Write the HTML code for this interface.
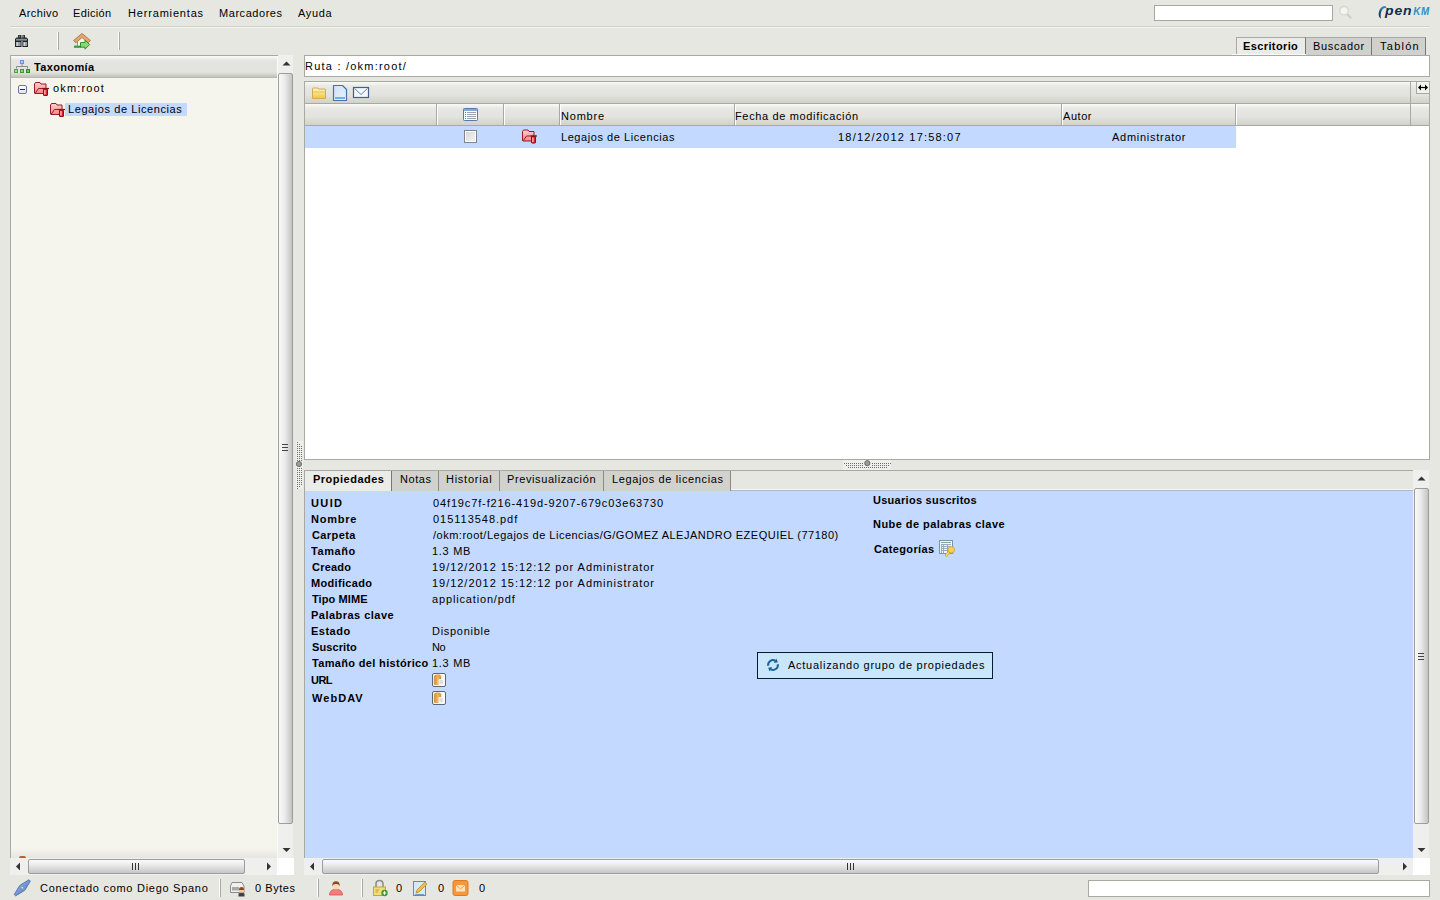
<!DOCTYPE html>
<html><head><meta charset="utf-8">
<style>
*{box-sizing:border-box;margin:0;padding:0}
html,body{width:1440px;height:900px;overflow:hidden}
body{background:#e7e7e2;font-family:"Liberation Sans",sans-serif;font-size:10.5px;letter-spacing:0.8px;color:#000;position:relative}
.a{position:absolute}
.t{position:absolute;white-space:nowrap;line-height:12px}
.b{font-weight:bold;letter-spacing:0.55px;color:#000}
.grad{background:linear-gradient(#fbfbf6 0px,#f2f2ed 2px,#e9e9e8 4px,#e5e5e1 7px,#e2e2de 13px,#dadad4 17px,#d2d2cb 21px)}
.trk{background:#efefee}
.thv{background:linear-gradient(90deg,#f9f9f9 0%,#ededed 40%,#cfcfcf 85%,#c4c4c4 100%);border:1px solid #9d9d9d;border-radius:2px}
.thh{background:linear-gradient(#fafafa 0%,#efefef 30%,#d2d2d2 80%,#c6c6c6 100%);border:1px solid #9d9d9d;border-radius:2px}
svg{position:absolute;overflow:visible}
.sep{position:absolute;width:2px;border-left:1px solid #a9a9a3;border-right:1px solid #fff}
.sepw{position:absolute;width:2px;border-left:1px solid #fff;border-right:1px solid #a9a9a3}
</style></head><body>

<!-- ============ MENU ============ -->
<div class="a" style="left:10px;top:26px;width:1420px;height:1px;background:#d2d2cd"></div>
<div class="a" style="left:10px;top:27px;width:1420px;height:1px;background:#f4f4f1"></div>

<!-- search -->
<div class="a" style="left:1154px;top:5px;width:179px;height:16px;background:#fff;border:1px solid #a7a7a2"></div>
<svg style="left:1338px;top:5px" width="16" height="16" viewBox="0 0 16 16">
 <circle cx="6" cy="5.7" r="4.2" fill="#f4f4f2" stroke="#d6d6d2" stroke-width="1.3"/>
 <line x1="9" y1="9" x2="13.3" y2="13.3" stroke="#cfcfca" stroke-width="2"/>
</svg>
<!-- logo -->
<svg style="left:1377px;top:4px" width="56" height="16" viewBox="0 0 56 16">
 <defs><linearGradient id="lg" x1="0" y1="0" x2="0" y2="1"><stop offset="0" stop-color="#3c93c8"/><stop offset="0.5" stop-color="#1b4f7a"/><stop offset="1" stop-color="#0c2238"/></linearGradient></defs>
 <path d="M7.6,2.1 C4,2.3 1.6,6.5 1.7,10.6 C1.8,12.8 2.7,14.1 3.8,14.4 C3.3,11.6 3.7,7.6 5.6,5.3 C6.6,4.2 8,3.9 9.6,4.2 C9.2,2.9 8.6,2.1 7.6,2.1Z" fill="url(#lg)"/>
 <text x="8" y="10.9" font-family="Liberation Sans" font-weight="bold" font-style="italic" font-size="12.5" fill="#112d4a" textLength="27.5" lengthAdjust="spacingAndGlyphs">pen</text>
 <text x="36.2" y="10.9" font-family="Liberation Sans" font-weight="bold" font-style="italic" font-size="10.5" fill="#2f8fc6" textLength="16.8" lengthAdjust="spacingAndGlyphs">KM</text>
</svg>

<!-- ============ TOOLBAR ============ -->
<svg style="left:14px;top:34px" width="16" height="14" viewBox="0 0 16 14">
 <rect x="4" y="1" width="3.4" height="3.5" fill="#2a2f34"/><rect x="8.4" y="1" width="2.6" height="3.5" fill="#2a2f34"/>
 <rect x="4.8" y="1.5" width="1" height="2.5" fill="#7d858c"/><rect x="9" y="1.5" width="1" height="2.5" fill="#7d858c"/>
 <path d="M1,13 V5 L2.5,3.5 H7.5 V13Z" fill="#1f2327"/>
 <path d="M8.4,13 V3.5 H12.5 L14,5 V13Z" fill="#1f2327"/>
 <rect x="7" y="4.5" width="2" height="2.5" fill="#1f2327"/>
 <rect x="2" y="4.8" width="11" height="1.8" fill="#8a9298"/>
 <rect x="2" y="8" width="4.6" height="4" fill="#9aa1a7"/><rect x="9.2" y="8" width="3.9" height="4" fill="#9aa1a7"/>
 <rect x="2.6" y="8" width="1.2" height="4" fill="#d3d7da"/><rect x="9.8" y="8" width="1.2" height="4" fill="#d3d7da"/>
</svg>
<div class="sepw" style="left:57px;top:32px;height:18px"></div>
<svg style="left:72px;top:31px" width="20" height="20" viewBox="0 0 20 20">
 <path d="M5,10.5 L10,6 L15,10.5 V16 H5Z" fill="#f8f6ef"/>
 <path d="M1.6,9.4 L10,2.4 L18.4,9.4 L16.2,11.8 L10,6.6 L3.8,11.8Z" fill="#e2a667" stroke="#a06c36" stroke-width="0.8" stroke-linejoin="round"/>
 <path d="M5.5,11 V15" stroke="#8e9a8c" stroke-width="1"/>
 <rect x="2" y="14.6" width="7" height="2.2" fill="#3f9a35"/>
 <path d="M8.5,11.5 H13 V9 L17.6,13.6 L13,18.2 V16.2 H8.5Z" fill="#8ed479" stroke="#3b8d32" stroke-width="1"/>
</svg>
<div class="sepw" style="left:118px;top:32px;height:18px"></div>

<!-- top right tabs -->
<div class="a" style="left:1236px;top:37px;width:70px;height:18px;background:#ebebe7;border:1px solid #a9a9a3;border-right-color:#767672;border-bottom:none"></div>
<div class="a" style="left:1232px;top:54px;width:74px;height:1px;background:#fbfbf9"></div>
<div class="a" style="left:1306px;top:37px;width:66px;height:18px;background:#d0d0cc;border:1px solid #a9a9a3;border-right-color:#767672;border-left:none;border-bottom:none"></div>
<div class="a" style="left:1372px;top:37px;width:54px;height:18px;background:#d0d0cc;border:1px solid #a9a9a3;border-right-color:#767672;border-left:none;border-bottom:none"></div>

<!-- ============ TREE ============ -->
<div class="a" style="left:10px;top:55px;width:268px;height:803px;background:#f5f5ee;border-left:1px solid #a9a9a3;border-top:1px solid #a9a9a3"></div>
<div class="a" style="left:11px;top:848px;width:266px;height:10px;background:linear-gradient(rgba(245,244,238,0),#e6e6e2)"></div>
<div class="a" style="left:11px;top:56px;width:266px;height:22px;background:linear-gradient(#fbfbf9 0px,#f0f0ec 2px,#e6e6e6 4px,#e3e3df 6px,#e3e3df 16px,#d8d8d2 18px,#c9c9c2 20px,#b6b6af 22px)"></div>
<div class="a" style="left:277px;top:56px;width:1px;height:802px;background:#fbfbf8"></div>
<svg style="left:13px;top:59px" width="18" height="15" viewBox="0 0 18 15">
 <rect x="7.5" y="1.5" width="3" height="3" fill="#a9cdf5" stroke="#5d95d8" stroke-width="1"/>
 <path d="M9,4.5 V7.5 M3.5,9.5 V7.5 H14.5 V9.5" fill="none" stroke="#8a8a8a" stroke-width="1"/>
 <rect x="1.5" y="10.5" width="3" height="3" fill="#9fe08f" stroke="#4aa63c" stroke-width="1"/>
 <rect x="7.5" y="10.5" width="3" height="3" fill="#8bd57b" stroke="#3d9a32" stroke-width="1"/>
 <rect x="13.5" y="10.5" width="3" height="3" fill="#6fc25e" stroke="#2f8a28" stroke-width="1"/>
</svg>
<!-- collapse box -->
<div class="a" style="left:18px;top:85px;width:9px;height:9px;border:1px solid #6f77a0;border-radius:2px;background:linear-gradient(#fff,#dfe3f0)"></div>
<div class="a" style="left:20px;top:89px;width:5px;height:1px;background:#1b2a7a"></div>
<!-- folder icon template (okm:root) -->
<svg style="left:33px;top:81px" width="17" height="15" viewBox="0 0 17 15">
 <defs><linearGradient id="fg" x1="0" y1="0" x2="0" y2="1"><stop offset="0" stop-color="#ffd0d0"/><stop offset="1" stop-color="#ff8080"/></linearGradient></defs>
 <path d="M1.5,3 L2.5,1.5 H7 L8,3 H13 V12.5 H2 L1.5,12Z" fill="url(#fg)" stroke="#8e1f24" stroke-width="1"/>
 <path d="M2,12.5 L5.5,7.5 H15" fill="none" stroke="#8e1f24" stroke-width="1"/>
 <rect x="10.5" y="8" width="4" height="6.5" fill="#d9262c" stroke="#8a1116" stroke-width="1" rx="0.5"/>
 <rect x="11.3" y="9" width="1.2" height="4.5" fill="#ffd6d6"/>
 <path d="M9.5,7.5 H16" stroke="#8a1116" stroke-width="1.2"/>
</svg>
<div class="a" style="left:65px;top:103px;width:122px;height:13px;background:#c3d9ff"></div>
<svg style="left:49px;top:102px" width="17" height="15" viewBox="0 0 17 15">
 <path d="M1.5,3 L2.5,1.5 H7 L8,3 H13 V12.5 H2 L1.5,12Z" fill="url(#fg)" stroke="#8e1f24" stroke-width="1"/>
 <path d="M2,12.5 L5.5,7.5 H15" fill="none" stroke="#8e1f24" stroke-width="1"/>
 <rect x="10.5" y="8" width="4" height="6.5" fill="#d9262c" stroke="#8a1116" stroke-width="1" rx="0.5"/>
 <rect x="11.3" y="9" width="1.2" height="4.5" fill="#ffd6d6"/>
 <path d="M9.5,7.5 H16" stroke="#8a1116" stroke-width="1.2"/>
</svg>
<!-- small orange bit at bottom of tree -->
<div class="a" style="left:19px;top:856px;width:7px;height:2px;background:#b4652a;border-radius:3px 3px 0 0"></div>

<!-- tree vertical scrollbar -->
<div class="a trk" style="left:278px;top:55px;width:15px;height:803px"></div>
<svg style="left:278px;top:55px" width="15" height="15" viewBox="0 0 15 15"><path d="M4.5,10.5 L8.5,6.5 L12.5,10.5Z" fill="#333"/></svg>
<div class="a thv" style="left:278px;top:73px;width:15px;height:751px"></div>
<div class="a" style="left:282px;top:444px;width:6px;height:1px;background:#444"></div>
<div class="a" style="left:282px;top:447px;width:6px;height:1px;background:#444"></div>
<div class="a" style="left:282px;top:450px;width:6px;height:1px;background:#444"></div>
<svg style="left:278px;top:843px" width="15" height="17" viewBox="0 0 15 17"><path d="M4.5,5 L8.5,9 L12.5,5Z" fill="#333"/></svg>
<!-- tree horizontal scrollbar -->
<div class="a trk" style="left:10px;top:858px;width:267px;height:17px"></div>
<svg style="left:10px;top:858px" width="18" height="17" viewBox="0 0 18 17"><path d="M10,4.5 L6,8.5 L10,12.5Z" fill="#333"/></svg>
<div class="a thh" style="left:28px;top:859px;width:217px;height:15px"></div>
<div class="a" style="left:132px;top:863px;width:1px;height:7px;background:#333"></div>
<div class="a" style="left:135px;top:863px;width:1px;height:7px;background:#333"></div>
<div class="a" style="left:138px;top:863px;width:1px;height:7px;background:#333"></div>
<svg style="left:258px;top:858px" width="18" height="17" viewBox="0 0 18 17"><path d="M9,4.5 L13,8.5 L9,12.5Z" fill="#333"/></svg>
<div class="a" style="left:277px;top:858px;width:17px;height:17px;background:#fff"></div>

<!-- vertical splitter grip -->
<div class="a" style="left:296px;top:441px;width:7px;height:48px;background:#eeeeeb"></div>
<svg style="left:294px;top:440px" width="10" height="50" viewBox="0 0 10 50"><g fill="#6e6e6e"><rect x="3" y="2" width="1" height="1"/><rect x="3" y="4" width="1" height="1"/><rect x="3" y="6" width="1" height="1"/><rect x="3" y="8" width="1" height="1"/><rect x="3" y="10" width="1" height="1"/><rect x="3" y="12" width="1" height="1"/><rect x="3" y="14" width="1" height="1"/><rect x="3" y="16" width="1" height="1"/><rect x="3" y="18" width="1" height="1"/><rect x="3" y="20" width="1" height="1"/><rect x="3" y="28" width="1" height="1"/><rect x="3" y="30" width="1" height="1"/><rect x="3" y="32" width="1" height="1"/><rect x="3" y="34" width="1" height="1"/><rect x="3" y="36" width="1" height="1"/><rect x="3" y="38" width="1" height="1"/><rect x="3" y="40" width="1" height="1"/><rect x="3" y="42" width="1" height="1"/><rect x="3" y="44" width="1" height="1"/><rect x="3" y="46" width="1" height="1"/><rect x="3" y="48" width="1" height="1"/><rect x="5" y="4" width="1" height="1"/><rect x="5" y="6" width="1" height="1"/><rect x="5" y="8" width="1" height="1"/><rect x="5" y="10" width="1" height="1"/><rect x="5" y="12" width="1" height="1"/><rect x="5" y="14" width="1" height="1"/><rect x="5" y="16" width="1" height="1"/><rect x="5" y="18" width="1" height="1"/><rect x="5" y="20" width="1" height="1"/><rect x="5" y="28" width="1" height="1"/><rect x="5" y="30" width="1" height="1"/><rect x="5" y="32" width="1" height="1"/><rect x="5" y="34" width="1" height="1"/><rect x="5" y="36" width="1" height="1"/><rect x="5" y="38" width="1" height="1"/><rect x="5" y="40" width="1" height="1"/><rect x="5" y="42" width="1" height="1"/><rect x="5" y="44" width="1" height="1"/><rect x="5" y="46" width="1" height="1"/><rect x="7" y="6" width="1" height="1"/><rect x="7" y="8" width="1" height="1"/><rect x="7" y="10" width="1" height="1"/><rect x="7" y="12" width="1" height="1"/><rect x="7" y="14" width="1" height="1"/><rect x="7" y="16" width="1" height="1"/><rect x="7" y="18" width="1" height="1"/><rect x="7" y="20" width="1" height="1"/><rect x="7" y="28" width="1" height="1"/><rect x="7" y="30" width="1" height="1"/><rect x="7" y="32" width="1" height="1"/><rect x="7" y="34" width="1" height="1"/><rect x="7" y="36" width="1" height="1"/><rect x="7" y="38" width="1" height="1"/><rect x="7" y="40" width="1" height="1"/><rect x="7" y="42" width="1" height="1"/><rect x="7" y="44" width="1" height="1"/></g><circle cx="5" cy="24" r="2.6" fill="#9a9a9a" stroke="#666" stroke-width="0.9"/></svg>

<!-- ============ RUTA ============ -->
<div class="a" style="left:304px;top:55px;width:1126px;height:22px;background:#fff;border:1px solid #a9a9a3"></div>

<!-- ============ FILE LIST ============ -->
<div class="a" style="left:304px;top:81px;width:1126px;height:379px;background:#fff;border:1px solid #a9a9a3"></div>
<div class="a grad" style="left:305px;top:82px;width:1124px;height:22px;border-bottom:1px solid #a9a9a3"></div>
<!-- folder yellow -->
<svg style="left:311px;top:87px" width="16" height="13" viewBox="0 0 16 13">
 <defs><linearGradient id="yg" x1="0" y1="0" x2="0" y2="1"><stop offset="0" stop-color="#fff6c4"/><stop offset="1" stop-color="#f1c63a"/></linearGradient></defs>
 <path d="M1.5,2 L2,1 H7 L7.5,2 H14.5 V11.5 H1.5Z" fill="url(#yg)" stroke="#d8a854" stroke-width="1"/>
 <path d="M2,5 H14" stroke="#e5c36a" stroke-width="1"/>
</svg>
<svg style="left:332px;top:84px" width="16" height="18" viewBox="0 0 16 18">
 <defs><linearGradient id="bg2" x1="0" y1="0" x2="1" y2="1"><stop offset="0" stop-color="#cfe1f7"/><stop offset="1" stop-color="#e8f1fb"/></linearGradient></defs>
 <path d="M1.5,1.5 H10.5 L14.5,5.5 V16.5 H1.5Z" fill="url(#bg2)" stroke="#4b72a8" stroke-width="1.2" stroke-linejoin="round"/>
 <rect x="3" y="13" width="10" height="2" fill="#6db3ea"/>
</svg>
<svg style="left:352px;top:86px" width="18" height="13" viewBox="0 0 18 13">
 <rect x="1.5" y="1.5" width="15" height="10" fill="#f3f7fd" stroke="#435f8c" stroke-width="1.2"/>
 <path d="M2.5,2.5 L9,8.5 L15.5,2.5" fill="none" stroke="#6a86b8" stroke-width="1"/>
</svg>
<!-- expand button -->
<div class="a" style="left:1410px;top:82px;width:1px;height:44px;background:#a9a9a3"></div>
<div class="a" style="left:1416px;top:82px;width:13px;height:12px;background:#f2f2ee;border-left:1px solid #a9a9a3;border-bottom:1px solid #a9a9a3"></div>
<svg style="left:1417px;top:82px" width="12" height="11" viewBox="0 0 12 11"><path d="M3,5.5 H9" stroke="#000" stroke-width="1.2"/><path d="M1,5.5 L4,2.5 V8.5Z M11,5.5 L8,2.5 V8.5Z" fill="#000"/></svg>

<!-- header row -->
<div class="a grad" style="left:305px;top:104px;width:1124px;height:22px;border-bottom:1px solid #a9a9a3"></div>
<div class="sep" style="left:436px;top:104px;height:21px"></div>
<div class="sep" style="left:503px;top:104px;height:21px"></div>
<div class="sep" style="left:559px;top:104px;height:21px"></div>
<div class="sep" style="left:734px;top:104px;height:21px"></div>
<div class="sep" style="left:1061px;top:104px;height:21px"></div>
<div class="sep" style="left:1235px;top:104px;height:21px"></div>
<div class="a" style="left:1410px;top:104px;width:1px;height:21px;background:#a9a9a3"></div>
<svg style="left:462px;top:107px" width="17" height="15" viewBox="0 0 17 15">
 <rect x="1.5" y="1.5" width="14" height="12" fill="#fbfcfe" stroke="#5b78a6" stroke-width="1" rx="0.8"/>
 <rect x="2" y="2" width="13" height="2" fill="#86a8d8"/>
 <g fill="#5f7fb0"><rect x="3" y="5" width="1" height="1"/><rect x="3" y="7" width="1" height="1"/><rect x="3" y="9" width="1" height="1"/><rect x="3" y="11" width="1" height="1"/></g>
 <g fill="#9aa3ad"><rect x="5" y="5" width="9" height="1"/><rect x="5" y="7" width="9" height="1"/><rect x="5" y="9" width="9" height="1"/><rect x="5" y="11" width="9" height="1"/></g>
</svg>

<!-- data row -->
<div class="a" style="left:305px;top:126px;width:931px;height:22px;background:#c3d9ff"></div>
<div class="a" style="left:464px;top:130px;width:13px;height:13px;border:1px solid #7d8390;background:linear-gradient(135deg,#d6d6d8,#f6f6f6);box-shadow:inset 0 0 0 1px #fff"></div>
<svg style="left:521px;top:128px" width="17" height="16" viewBox="0 0 17 15">
 <path d="M1.5,3 L2.5,1.5 H7 L8,3 H13 V12.5 H2 L1.5,12Z" fill="url(#fg)" stroke="#8e1f24" stroke-width="1"/>
 <path d="M2,12.5 L5.5,7.5 H15" fill="none" stroke="#8e1f24" stroke-width="1"/>
 <rect x="10.5" y="8" width="4" height="6.5" fill="#d9262c" stroke="#8a1116" stroke-width="1" rx="0.5"/>
 <rect x="11.3" y="9" width="1.2" height="4.5" fill="#ffd6d6"/>
 <path d="M9.5,7.5 H16" stroke="#8a1116" stroke-width="1.2"/>
</svg>

<!-- horizontal splitter grip -->
<div class="a" style="left:843px;top:460px;width:48px;height:10px;background:#eeeeeb"></div>
<svg style="left:842px;top:459px" width="52" height="11" viewBox="0 0 52 11"><g fill="#6e6e6e"><rect x="2" y="4" width="1" height="1"/><rect x="4" y="4" width="1" height="1"/><rect x="6" y="4" width="1" height="1"/><rect x="8" y="4" width="1" height="1"/><rect x="10" y="4" width="1" height="1"/><rect x="12" y="4" width="1" height="1"/><rect x="14" y="4" width="1" height="1"/><rect x="16" y="4" width="1" height="1"/><rect x="18" y="4" width="1" height="1"/><rect x="20" y="4" width="1" height="1"/><rect x="30" y="4" width="1" height="1"/><rect x="32" y="4" width="1" height="1"/><rect x="34" y="4" width="1" height="1"/><rect x="36" y="4" width="1" height="1"/><rect x="38" y="4" width="1" height="1"/><rect x="40" y="4" width="1" height="1"/><rect x="42" y="4" width="1" height="1"/><rect x="44" y="4" width="1" height="1"/><rect x="46" y="4" width="1" height="1"/><rect x="48" y="4" width="1" height="1"/><rect x="4" y="6" width="1" height="1"/><rect x="6" y="6" width="1" height="1"/><rect x="8" y="6" width="1" height="1"/><rect x="10" y="6" width="1" height="1"/><rect x="12" y="6" width="1" height="1"/><rect x="14" y="6" width="1" height="1"/><rect x="16" y="6" width="1" height="1"/><rect x="18" y="6" width="1" height="1"/><rect x="20" y="6" width="1" height="1"/><rect x="30" y="6" width="1" height="1"/><rect x="32" y="6" width="1" height="1"/><rect x="34" y="6" width="1" height="1"/><rect x="36" y="6" width="1" height="1"/><rect x="38" y="6" width="1" height="1"/><rect x="40" y="6" width="1" height="1"/><rect x="42" y="6" width="1" height="1"/><rect x="44" y="6" width="1" height="1"/><rect x="46" y="6" width="1" height="1"/><rect x="6" y="8" width="1" height="1"/><rect x="8" y="8" width="1" height="1"/><rect x="10" y="8" width="1" height="1"/><rect x="12" y="8" width="1" height="1"/><rect x="14" y="8" width="1" height="1"/><rect x="16" y="8" width="1" height="1"/><rect x="18" y="8" width="1" height="1"/><rect x="20" y="8" width="1" height="1"/><rect x="22" y="8" width="1" height="1"/><rect x="24" y="8" width="1" height="1"/><rect x="26" y="8" width="1" height="1"/><rect x="28" y="8" width="1" height="1"/><rect x="30" y="8" width="1" height="1"/><rect x="32" y="8" width="1" height="1"/><rect x="34" y="8" width="1" height="1"/><rect x="36" y="8" width="1" height="1"/><rect x="38" y="8" width="1" height="1"/><rect x="40" y="8" width="1" height="1"/><rect x="42" y="8" width="1" height="1"/><rect x="44" y="8" width="1" height="1"/></g><circle cx="25.3" cy="4.2" r="2.6" fill="#9a9a9a" stroke="#666" stroke-width="0.9"/></svg>

<!-- ============ PROPERTIES ============ -->
<div class="a" style="left:304px;top:470px;width:1109px;height:21px;background:#e7e7e2;border-top:1px solid #a9a9a3;border-left:1px solid #a9a9a3"></div>
<!-- tabs -->
<div class="a" style="left:305px;top:471px;width:87px;height:20px;background:#ebebe7"></div>
<div class="a" style="left:391px;top:471px;width:340px;height:20px;background:#d1d1cd;border-left:1px solid #777773;border-right:1px solid #8a8a86"></div>
<div class="a" style="left:438px;top:471px;width:1px;height:20px;background:#8a8a86"></div>
<div class="a" style="left:499px;top:471px;width:1px;height:20px;background:#8a8a86"></div>
<div class="a" style="left:603px;top:471px;width:1px;height:20px;background:#8a8a86"></div>

<div class="a" style="left:731px;top:489px;width:682px;height:1px;background:#f6f6f4"></div>
<div class="a" style="left:731px;top:490px;width:682px;height:1px;background:#aeb8c6"></div>
<div class="a" style="left:304px;top:491px;width:1109px;height:367px;background:#c3d9ff;border-left:1px solid #a9a9a3"></div>


<!-- copy icons -->
<svg style="left:431px;top:672px" width="16" height="16" viewBox="0 0 16 16">
 <defs><linearGradient id="og" x1="0" y1="0" x2="1" y2="0"><stop offset="0" stop-color="#d58a28"/><stop offset="0.5" stop-color="#f3b85a"/><stop offset="1" stop-color="#d99235"/></linearGradient></defs>
 <rect x="1.5" y="1.5" width="13" height="13" rx="1.5" fill="#fbfbf6" stroke="#5f6674" stroke-width="1"/>
 <path d="M3.3,4.6 Q3.3,2.8 6.6,2.8 Q9.9,2.8 9.9,4.6 V12.6 H3.3Z" fill="url(#og)" stroke="#c07a22" stroke-width="0.5"/>
 <rect x="8" y="7.6" width="4.6" height="5" fill="#dedede" stroke="#fbfbfb" stroke-width="0.9"/>
</svg>
<svg style="left:431px;top:690px" width="16" height="16" viewBox="0 0 16 16">
 <defs><linearGradient id="og" x1="0" y1="0" x2="1" y2="0"><stop offset="0" stop-color="#d58a28"/><stop offset="0.5" stop-color="#f3b85a"/><stop offset="1" stop-color="#d99235"/></linearGradient></defs>
 <rect x="1.5" y="1.5" width="13" height="13" rx="1.5" fill="#fbfbf6" stroke="#5f6674" stroke-width="1"/>
 <path d="M3.3,4.6 Q3.3,2.8 6.6,2.8 Q9.9,2.8 9.9,4.6 V12.6 H3.3Z" fill="url(#og)" stroke="#c07a22" stroke-width="0.5"/>
 <rect x="8" y="7.6" width="4.6" height="5" fill="#dedede" stroke="#fbfbfb" stroke-width="0.9"/>
</svg>

<svg style="left:938px;top:539px" width="18" height="18" viewBox="0 0 18 18">
 <rect x="1.5" y="1.5" width="13" height="13" fill="#eef8fb" stroke="#7d92b3" stroke-width="1"/>
 <rect x="3" y="3" width="10" height="1" fill="#7fae84"/>
 <rect x="3" y="5" width="10" height="1" fill="#98aac4"/>
 <rect x="3" y="5" width="1" height="9" fill="#98aac4"/>
 <rect x="5" y="5" width="1" height="9" fill="#98aac4"/>
 <rect x="9" y="5" width="1" height="9" fill="#98aac4"/>
 <rect x="3" y="7" width="10" height="1" fill="#98aac4"/>
 <rect x="3" y="9" width="10" height="1" fill="#98aac4"/>
 <rect x="3" y="11" width="10" height="1" fill="#98aac4"/>
 <path d="M12,12.5 L8.5,16" stroke="#c9982c" stroke-width="3" stroke-linecap="round"/>
 <path d="M12,12.5 L8.5,16" stroke="#f5d36a" stroke-width="1.8" stroke-linecap="round"/>
 <circle cx="13.3" cy="10.8" r="3.3" fill="#f7d253" stroke="#c9982c" stroke-width="0.7"/>
</svg>

<!-- popup -->
<div class="a" style="left:757px;top:652px;width:236px;height:27px;background:#c9e6fb;border:1px solid #0b1a33"></div>
<svg style="left:765px;top:656px" width="16" height="18" viewBox="0 0 16 18">
 <path d="M3.2,9.8 A4.8,4.8 0 0 1 10.4,4.84" fill="none" stroke="#1d6190" stroke-width="2"/>
 <path d="M12.9,6.3 L11.3,2.5 L8.9,6.9Z" fill="#1d6190"/>
 <path d="M12.8,8.2 A4.8,4.8 0 0 1 5.6,13.16" fill="none" stroke="#1d6190" stroke-width="2"/>
 <path d="M3.1,11.7 L4.7,15.5 L7.1,11.1Z" fill="#1d6190"/>
</svg>

<!-- properties v scrollbar -->
<div class="a trk" style="left:1413px;top:470px;width:16px;height:388px"></div>
<svg style="left:1413px;top:470px" width="16" height="16" viewBox="0 0 16 16"><path d="M4.5,10.5 L8.5,6.5 L12.5,10.5Z" fill="#333"/></svg>
<div class="a thv" style="left:1414px;top:488px;width:15px;height:336px"></div>
<div class="a" style="left:1418px;top:653px;width:6px;height:1px;background:#444"></div>
<div class="a" style="left:1418px;top:656px;width:6px;height:1px;background:#444"></div>
<div class="a" style="left:1418px;top:659px;width:6px;height:1px;background:#444"></div>
<svg style="left:1413px;top:843px" width="16" height="17" viewBox="0 0 16 17"><path d="M4.5,5 L8.5,9 L12.5,5Z" fill="#333"/></svg>
<!-- properties h scrollbar -->
<div class="a trk" style="left:304px;top:858px;width:1109px;height:17px"></div>
<svg style="left:304px;top:858px" width="18" height="17" viewBox="0 0 18 17"><path d="M10,4.5 L6,8.5 L10,12.5Z" fill="#333"/></svg>
<div class="a thh" style="left:322px;top:859px;width:1057px;height:15px"></div>
<div class="a" style="left:847px;top:863px;width:1px;height:7px;background:#333"></div>
<div class="a" style="left:850px;top:863px;width:1px;height:7px;background:#333"></div>
<div class="a" style="left:853px;top:863px;width:1px;height:7px;background:#333"></div>
<svg style="left:1394px;top:858px" width="18" height="17" viewBox="0 0 18 17"><path d="M9,4.5 L13,8.5 L9,12.5Z" fill="#333"/></svg>
<div class="a" style="left:1413px;top:858px;width:17px;height:17px;background:#fff"></div>

<!-- ============ STATUS ============ -->
<svg style="left:12px;top:878px" width="20" height="20" viewBox="0 0 20 20">
 <defs><linearGradient id="pg" x1="0" y1="0" x2="1" y2="1"><stop offset="0" stop-color="#9bb9ea"/><stop offset="1" stop-color="#4f73b8"/></linearGradient></defs>
 <path d="M3.6,17.9 L12.4,12.6 L13.1,11.9 L18.4,3.1 L17,1.7 L8.2,7.1 L7.5,7.8 L2.2,16.5Z" fill="url(#pg)" stroke="#3f5f9c" stroke-width="0.7" stroke-linejoin="round"/>
 <path d="M8.3,7.8 L12.4,11.9" stroke="#79b88c" stroke-width="1.1"/>
 <circle cx="10.3" cy="9.8" r="0.8" fill="#e8f0ff"/>
</svg>
<div class="sepw" style="left:219px;top:879px;height:18px"></div>
<svg style="left:229px;top:881px" width="18" height="16" viewBox="0 0 18 16">
 <path d="M3,1.5 H13 L15,5 V11.5 H1.5 V5Z" fill="#f0f0f0" stroke="#8a8a8a" stroke-width="1"/>
 <rect x="3" y="6" width="7" height="3.5" fill="#a8a8a8"/>
 <circle cx="12.5" cy="9.5" r="2.5" fill="#f5c9a0"/>
 <path d="M10,9 Q10,6 12.5,6 Q15,6 15,9" fill="#8a4a1a"/>
 <path d="M9.5,15.5 V12.5 Q12.5,11 15.5,12.5 V15.5Z" fill="#3d4048"/>
</svg>
<div class="sepw" style="left:317px;top:879px;height:18px"></div>
<svg style="left:328px;top:880px" width="16" height="16" viewBox="0 0 16 16">
 <path d="M1.5,15 Q1.5,9.6 8,9.2 Q14.5,9.6 14.5,15Z" fill="#f27d7b" stroke="#d9534f" stroke-width="0.8"/>
 <circle cx="8" cy="6" r="3.6" fill="#fcd8b6"/>
 <path d="M4.2,6 Q4.1,1.3 8,1.3 Q11.9,1.3 11.8,6 Q10.4,3.6 8,4 Q5.6,3.6 4.2,6Z" fill="#8a4a1f"/>
</svg>
<div class="sepw" style="left:361px;top:879px;height:18px"></div>
<svg style="left:372px;top:879px" width="17" height="18" viewBox="0 0 17 18">
 <path d="M4,8 V5 Q4,1.5 7.5,1.5 Q11,1.5 11,5 V8" fill="none" stroke="#8d8d8d" stroke-width="1.6"/>
 <rect x="1.5" y="8" width="12" height="8.5" fill="#f5dc7a" stroke="#c9a43a" stroke-width="1"/>
 <path d="M3.5,11 H7 M3.5,13 H6" stroke="#b08a30" stroke-width="0.8"/>
 <circle cx="12.5" cy="14" r="3.2" fill="#3e9a35"/>
 <path d="M10.8,14 H14.2 M12.5,12.3 V15.7" stroke="#fff" stroke-width="1.2"/>
</svg>
<svg style="left:412px;top:879px" width="17" height="18" viewBox="0 0 17 18">
 <rect x="1.5" y="2.5" width="12" height="14" fill="#d7e8fa" stroke="#5a8bc8" stroke-width="1"/>
 <path d="M4,14 L5,11 L13,3 L15,5 L7,13Z" fill="#f2c04a" stroke="#b88a2a" stroke-width="0.8"/>
 <path d="M3,15.5 H12" stroke="#6a9ad0" stroke-width="1"/>
</svg>
<svg style="left:452px;top:879px" width="17" height="18" viewBox="0 0 17 18">
 <rect x="1" y="1.5" width="15" height="15" rx="2" fill="#f7963a" stroke="#e07a20" stroke-width="1"/>
 <path d="M4,6 H13 V12.5 H4Z" fill="#ffe3c0"/>
 <path d="M4,6 L8.5,10 L13,6" fill="none" stroke="#f0a050" stroke-width="1"/>
</svg>
<div class="a" style="left:1088px;top:880px;width:342px;height:17px;background:#fff;border:1px solid #a9a9a3"></div>

<div class="t" style="left:19.00px;top:8.00px;font-size:10.0px;letter-spacing:0.371px;transform:scaleX(1.1);transform-origin:0 0;-webkit-text-stroke:0.0px #000;font-weight:normal">Archivo</div>
<div class="t" style="left:73.40px;top:8.00px;font-size:10.0px;letter-spacing:0.317px;transform:scaleX(1.1);transform-origin:0 0;-webkit-text-stroke:0.0px #000;font-weight:normal">Edición</div>
<div class="t" style="left:127.80px;top:8.00px;font-size:10.0px;letter-spacing:0.750px;transform:scaleX(1.1);transform-origin:0 0;-webkit-text-stroke:0.0px #000;font-weight:normal">Herramientas</div>
<div class="t" style="left:218.50px;top:8.00px;font-size:10.0px;letter-spacing:0.500px;transform:scaleX(1.1);transform-origin:0 0;-webkit-text-stroke:0.0px #000;font-weight:normal">Marcadores</div>
<div class="t" style="left:298.10px;top:8.00px;font-size:10.0px;letter-spacing:0.600px;transform:scaleX(1.1);transform-origin:0 0;-webkit-text-stroke:0.0px #000;font-weight:normal">Ayuda</div>
<div class="t" style="left:1243.20px;top:41.00px;font-size:10.0px;letter-spacing:0.350px;transform:scaleX(1.1);transform-origin:0 0;-webkit-text-stroke:0.0px #000;font-weight:bold">Escritorio</div>
<div class="t" style="left:1313.00px;top:41.00px;font-size:10.0px;letter-spacing:0.625px;transform:scaleX(1.1);transform-origin:0 0;-webkit-text-stroke:0.0px #000;font-weight:normal">Buscador</div>
<div class="t" style="left:1380.00px;top:41.00px;font-size:10.0px;letter-spacing:1.140px;transform:scaleX(1.1);transform-origin:0 0;-webkit-text-stroke:0.0px #000;font-weight:normal">Tablón</div>
<div class="t" style="left:304.50px;top:61.00px;font-size:10.0px;letter-spacing:1.111px;transform:scaleX(1.1);transform-origin:0 0;-webkit-text-stroke:0.0px #000;font-weight:normal">Ruta : /okm:root/</div>
<div class="t" style="left:34.40px;top:62.00px;font-size:10.0px;letter-spacing:0.325px;transform:scaleX(1.1);transform-origin:0 0;-webkit-text-stroke:0.0px #000;font-weight:bold">Taxonomía</div>
<div class="t" style="left:52.50px;top:83.00px;font-size:10.0px;letter-spacing:1.037px;transform:scaleX(1.1);transform-origin:0 0;-webkit-text-stroke:0.0px #000;font-weight:normal">okm:root</div>
<div class="t" style="left:68.30px;top:104.00px;font-size:10.0px;letter-spacing:0.529px;transform:scaleX(1.1);transform-origin:0 0;-webkit-text-stroke:0.0px #000;font-weight:normal">Legajos de Licencias</div>
<div class="t" style="left:560.70px;top:110.50px;font-size:10.0px;letter-spacing:0.720px;transform:scaleX(1.1);transform-origin:0 0;-webkit-text-stroke:0.0px #000;font-weight:normal">Nombre</div>
<div class="t" style="left:735.25px;top:110.50px;font-size:10.0px;letter-spacing:0.591px;transform:scaleX(1.1);transform-origin:0 0;-webkit-text-stroke:0.0px #000;font-weight:normal">Fecha de modificación</div>
<div class="t" style="left:1063.20px;top:110.50px;font-size:10.0px;letter-spacing:0.500px;transform:scaleX(1.1);transform-origin:0 0;-webkit-text-stroke:0.0px #000;font-weight:normal">Autor</div>
<div class="t" style="left:560.70px;top:132.25px;font-size:10.0px;letter-spacing:0.514px;transform:scaleX(1.1);transform-origin:0 0;-webkit-text-stroke:0.0px #000;font-weight:normal">Legajos de Licencias</div>
<div class="t" style="left:837.75px;top:132.25px;font-size:10.0px;letter-spacing:1.092px;transform:scaleX(1.1);transform-origin:0 0;-webkit-text-stroke:0.0px #000;font-weight:normal">18/12/2012 17:58:07</div>
<div class="t" style="left:1112.20px;top:132.25px;font-size:10.0px;letter-spacing:0.662px;transform:scaleX(1.1);transform-origin:0 0;-webkit-text-stroke:0.0px #000;font-weight:normal">Administrator</div>
<div class="t" style="left:312.75px;top:473.60px;font-size:10.0px;letter-spacing:0.450px;transform:scaleX(1.1);transform-origin:0 0;-webkit-text-stroke:0.0px #000;font-weight:bold">Propiedades</div>
<div class="t" style="left:399.50px;top:473.60px;font-size:10.0px;letter-spacing:0.525px;transform:scaleX(1.1);transform-origin:0 0;-webkit-text-stroke:0.0px #000;font-weight:normal">Notas</div>
<div class="t" style="left:446.40px;top:473.60px;font-size:10.0px;letter-spacing:0.667px;transform:scaleX(1.1);transform-origin:0 0;-webkit-text-stroke:0.0px #000;font-weight:normal">Historial</div>
<div class="t" style="left:507.25px;top:473.60px;font-size:10.0px;letter-spacing:0.547px;transform:scaleX(1.1);transform-origin:0 0;-webkit-text-stroke:0.0px #000;font-weight:normal">Previsualización</div>
<div class="t" style="left:611.50px;top:473.60px;font-size:10.0px;letter-spacing:0.571px;transform:scaleX(1.1);transform-origin:0 0;-webkit-text-stroke:0.0px #000;font-weight:normal">Legajos de licencias</div>
<div class="t" style="left:310.50px;top:498.00px;font-size:10.0px;letter-spacing:1.250px;transform:scaleX(1.1);transform-origin:0 0;-webkit-text-stroke:0.0px #000;font-weight:bold">UUID</div>
<div class="t" style="left:310.50px;top:514.00px;font-size:10.0px;letter-spacing:0.683px;transform:scaleX(1.1);transform-origin:0 0;-webkit-text-stroke:0.0px #000;font-weight:bold">Nombre</div>
<div class="t" style="left:311.50px;top:530.00px;font-size:10.0px;letter-spacing:0.357px;transform:scaleX(1.1);transform-origin:0 0;-webkit-text-stroke:0.0px #000;font-weight:bold">Carpeta</div>
<div class="t" style="left:311.25px;top:546.00px;font-size:10.0px;letter-spacing:0.508px;transform:scaleX(1.1);transform-origin:0 0;-webkit-text-stroke:0.0px #000;font-weight:bold">Tamaño</div>
<div class="t" style="left:311.50px;top:562.00px;font-size:10.0px;letter-spacing:0.200px;transform:scaleX(1.1);transform-origin:0 0;-webkit-text-stroke:0.0px #000;font-weight:bold">Creado</div>
<div class="t" style="left:310.50px;top:578.00px;font-size:10.0px;letter-spacing:0.290px;transform:scaleX(1.1);transform-origin:0 0;-webkit-text-stroke:0.0px #000;font-weight:bold">Modificado</div>
<div class="t" style="left:311.50px;top:594.00px;font-size:10.0px;letter-spacing:0.087px;transform:scaleX(1.1);transform-origin:0 0;-webkit-text-stroke:0.0px #000;font-weight:bold">Tipo MIME</div>
<div class="t" style="left:310.70px;top:610.00px;font-size:10.0px;letter-spacing:0.433px;transform:scaleX(1.1);transform-origin:0 0;-webkit-text-stroke:0.0px #000;font-weight:bold">Palabras clave</div>
<div class="t" style="left:310.50px;top:626.00px;font-size:10.0px;letter-spacing:0.450px;transform:scaleX(1.1);transform-origin:0 0;-webkit-text-stroke:0.0px #000;font-weight:bold">Estado</div>
<div class="t" style="left:311.50px;top:642.00px;font-size:10.0px;letter-spacing:0.086px;transform:scaleX(1.1);transform-origin:0 0;-webkit-text-stroke:0.0px #000;font-weight:bold">Suscrito</div>
<div class="t" style="left:311.50px;top:658.00px;font-size:10.0px;letter-spacing:0.310px;transform:scaleX(1.1);transform-origin:0 0;-webkit-text-stroke:0.0px #000;font-weight:bold">Tamaño del histórico</div>
<div class="t" style="left:310.50px;top:674.50px;font-size:10.0px;letter-spacing:-0.500px;transform:scaleX(1.1);transform-origin:0 0;-webkit-text-stroke:0.0px #000;font-weight:bold">URL</div>
<div class="t" style="left:311.50px;top:692.50px;font-size:10.0px;letter-spacing:0.950px;transform:scaleX(1.1);transform-origin:0 0;-webkit-text-stroke:0.0px #000;font-weight:bold">WebDAV</div>
<div class="t" style="left:432.50px;top:498.00px;font-size:10.0px;letter-spacing:0.784px;transform:scaleX(1.1);transform-origin:0 0;-webkit-text-stroke:0.0px #000;font-weight:normal">04f19c7f-f216-419d-9207-679c03e63730</div>
<div class="t" style="left:432.50px;top:514.00px;font-size:10.0px;letter-spacing:0.885px;transform:scaleX(1.1);transform-origin:0 0;-webkit-text-stroke:0.0px #000;font-weight:normal">015113548.pdf</div>
<div class="t" style="left:432.50px;top:530.00px;font-size:10.0px;letter-spacing:0.456px;transform:scaleX(1.1);transform-origin:0 0;-webkit-text-stroke:0.0px #000;font-weight:normal">/okm:root/Legajos de Licencias/G/GOMEZ ALEJANDRO EZEQUIEL (77180)</div>
<div class="t" style="left:431.80px;top:546.00px;font-size:10.0px;letter-spacing:0.633px;transform:scaleX(1.1);transform-origin:0 0;-webkit-text-stroke:0.0px #000;font-weight:normal">1.3 MB</div>
<div class="t" style="left:431.50px;top:562.00px;font-size:10.0px;letter-spacing:0.881px;transform:scaleX(1.1);transform-origin:0 0;-webkit-text-stroke:0.0px #000;font-weight:normal">19/12/2012 15:12:12 por Administrator</div>
<div class="t" style="left:431.50px;top:578.00px;font-size:10.0px;letter-spacing:0.881px;transform:scaleX(1.1);transform-origin:0 0;-webkit-text-stroke:0.0px #000;font-weight:normal">19/12/2012 15:12:12 por Administrator</div>
<div class="t" style="left:431.50px;top:594.00px;font-size:10.0px;letter-spacing:0.767px;transform:scaleX(1.1);transform-origin:0 0;-webkit-text-stroke:0.0px #000;font-weight:normal">application/pdf</div>
<div class="t" style="left:431.50px;top:626.00px;font-size:10.0px;letter-spacing:0.650px;transform:scaleX(1.1);transform-origin:0 0;-webkit-text-stroke:0.0px #000;font-weight:normal">Disponible</div>
<div class="t" style="left:431.50px;top:642.00px;font-size:10.0px;letter-spacing:-0.500px;transform:scaleX(1.1);transform-origin:0 0;-webkit-text-stroke:0.0px #000;font-weight:normal">No</div>
<div class="t" style="left:431.80px;top:658.00px;font-size:10.0px;letter-spacing:0.633px;transform:scaleX(1.1);transform-origin:0 0;-webkit-text-stroke:0.0px #000;font-weight:normal">1.3 MB</div>
<div class="t" style="left:873.25px;top:495.25px;font-size:10.0px;letter-spacing:0.250px;transform:scaleX(1.1);transform-origin:0 0;-webkit-text-stroke:0.0px #000;font-weight:bold">Usuarios suscritos</div>
<div class="t" style="left:873.25px;top:519.25px;font-size:10.0px;letter-spacing:0.402px;transform:scaleX(1.1);transform-origin:0 0;-webkit-text-stroke:0.0px #000;font-weight:bold">Nube de palabras clave</div>
<div class="t" style="left:874.25px;top:543.50px;font-size:10.0px;letter-spacing:0.325px;transform:scaleX(1.1);transform-origin:0 0;-webkit-text-stroke:0.0px #000;font-weight:bold">Categorías</div>
<div class="t" style="left:788.25px;top:660.25px;font-size:10.0px;letter-spacing:0.664px;transform:scaleX(1.1);transform-origin:0 0;-webkit-text-stroke:0.0px #000;font-weight:normal">Actualizando grupo de propiedades</div>
<div class="t" style="left:39.70px;top:883.00px;font-size:10.0px;letter-spacing:0.652px;transform:scaleX(1.1);transform-origin:0 0;-webkit-text-stroke:0.0px #000;font-weight:normal">Conectado como Diego Spano</div>
<div class="t" style="left:254.60px;top:883.00px;font-size:10.0px;letter-spacing:0.500px;transform:scaleX(1.1);transform-origin:0 0;-webkit-text-stroke:0.0px #000;font-weight:normal">0 Bytes</div>
<div class="t" style="left:396.30px;top:883.00px;font-size:10.0px;letter-spacing:0.500px;transform:scaleX(1.1);transform-origin:0 0;-webkit-text-stroke:0.0px #000;font-weight:normal">0</div>
<div class="t" style="left:437.60px;top:883.00px;font-size:10.0px;letter-spacing:0.500px;transform:scaleX(1.1);transform-origin:0 0;-webkit-text-stroke:0.0px #000;font-weight:normal">0</div>
<div class="t" style="left:478.60px;top:883.00px;font-size:10.0px;letter-spacing:0.500px;transform:scaleX(1.1);transform-origin:0 0;-webkit-text-stroke:0.0px #000;font-weight:normal">0</div>
</body></html>
